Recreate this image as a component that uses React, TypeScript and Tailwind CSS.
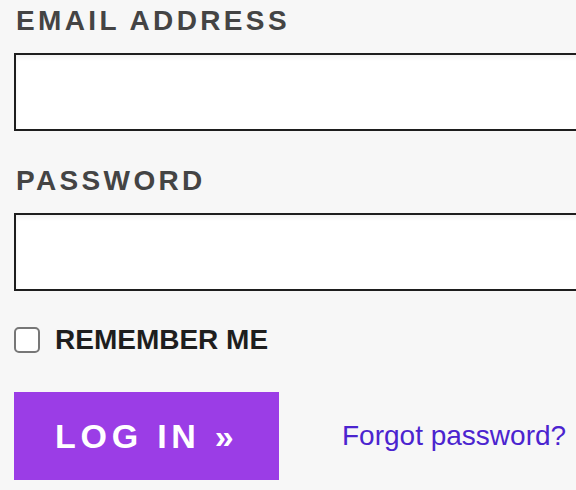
export default function App() {
  return (
    <div
      className="w-full h-[490px] overflow-hidden bg-[#f7f7f7] pl-[14px] pt-[7px]"
      style={{ fontFamily: '"Liberation Sans", Arial, sans-serif' }}
    >
      <form className="flex flex-col" onSubmit={(e) => e.preventDefault()}>
        <label
          htmlFor="email"
          className="block pl-[2px] text-[28px] leading-[28px] font-bold tracking-[0.12em] text-[#444444]"
        >
          EMAIL ADDRESS
        </label>
        <input
          id="email"
          type="email"
          className="mt-[18px] h-[78px] w-[640px] border-2 border-[#1e1e1e] bg-white shadow-[inset_0_3px_4px_rgba(0,0,0,0.05)] outline-none"
        />

        <label
          htmlFor="password"
          className="mt-[36px] block pl-[2px] text-[28px] leading-[28px] font-bold tracking-[0.12em] text-[#444444]"
        >
          PASSWORD
        </label>
        <input
          id="password"
          type="password"
          className="mt-[18px] h-[78px] w-[640px] border-2 border-[#1e1e1e] bg-white shadow-[inset_0_3px_4px_rgba(0,0,0,0.05)] outline-none"
        />

        {/* Remember me */}
        <label className="mt-[35px] flex items-center gap-[15px]">
          <span className="h-[26px] w-[26px] rounded-[5px] border-2 border-[#777777] bg-white" />
          <span className="text-[28px] leading-[28px] font-bold text-[#1e1e1e]">REMEMBER ME</span>
        </label>

        <div className="mt-[38px] flex items-center gap-[63px]">
          <button
            type="submit"
            className="h-[88px] w-[265px] bg-[#9b3de6] pl-[41px] text-left text-[34px] leading-none font-bold tracking-[0.14em] text-white"
          >
            LOG IN »
          </button>
          <a href="#" className="text-[28px] leading-none text-[#4b24cf]">
            Forgot password?
          </a>
        </div>
      </form>
    </div>
  );
}
